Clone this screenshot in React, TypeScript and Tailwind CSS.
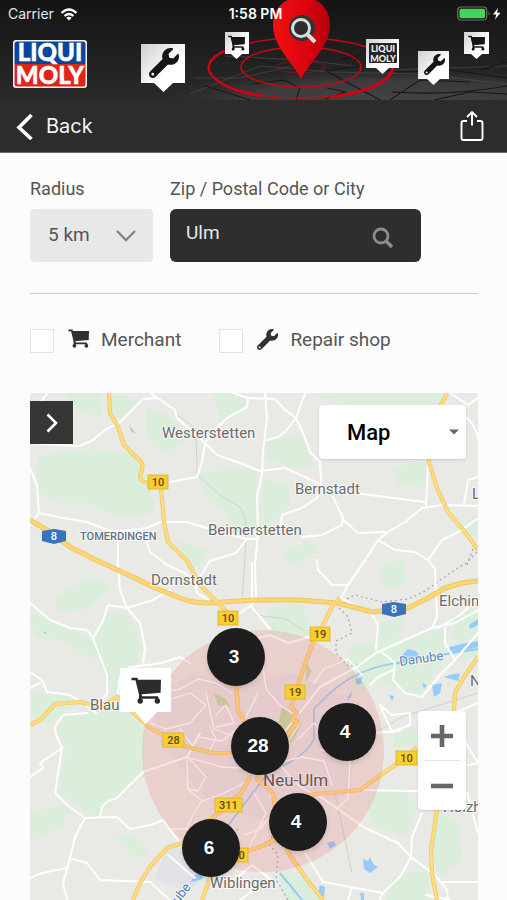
import React, { useState } from 'react';
import { FaWrench } from 'react-icons/fa';

const AREAS = [
  'M10 65 L60 58 L100 62 L118 90 L122 118 L90 124 L60 108 L30 108 L8 96 Z',
  'M85 4 L105 8 L92 24 L80 14 Z',
  'M38 0 L66 0 L70 22 L50 16 Z',
  'M118 16 L140 26 L150 48 L134 60 L118 40 Z',
  'M170 82 L224 76 L230 132 L206 138 L196 116 L182 108 Z',
  'M186 0 L216 0 L212 16 L192 26 Z',
  'M150 150 L176 158 L166 172 L158 168 Z',
  'M238 50 L270 44 L282 72 L262 72 L238 64 Z',
  'M234 88 L256 94 L258 110 L236 132 Z',
  'M292 2 L400 0 L412 6 L396 14 L330 12 Z',
  'M366 76 L396 70 L394 92 L368 90 Z',
  'M254 160 L278 150 L286 158 L262 170 Z',
  'M426 136 L448 124 L448 140 L436 142 Z',
  'M26 206 L62 186 L78 196 L56 214 L30 216 Z',
  'M2 222 L40 238 L58 246 L68 262 L56 262 L36 246 L6 242 Z',
  'M80 220 L98 224 L110 250 L104 272 L84 300 L74 276 L66 248 Z',
  'M4 302 L36 304 L40 314 L18 330 L4 322 Z',
  'M38 322 L90 316 L114 338 L112 382 L88 404 L66 422 L46 410 L30 396 L38 356 L28 336 Z',
  'M2 420 L38 414 L30 432 L2 446 Z',
  'M88 444 L104 462 L116 460 L106 448 Z',
  'M240 218 L268 210 L282 238 L264 244 L240 240 Z',
  'M350 178 L370 168 L374 188 L356 194 Z',
  'M322 254 L380 246 L412 238 L412 266 L388 300 L366 292 L344 284 L330 300 L318 274 Z',
  'M352 232 L372 226 L366 246 L350 252 Z',
  'M424 224 L448 218 L448 262 L430 266 Z',
  'M338 404 L372 396 L384 414 L374 440 L344 432 Z',
  'M404 420 L424 428 L430 462 L412 482 L402 462 Z',
  'M250 478 L276 488 L292 507 L258 507 Z',
  'M366 340 L392 336 L388 352 L366 352 Z',
  'M364 486 L396 478 L398 507 L358 507 Z',
];

const LOCAL_ROADS = [
  'M17 0 L12 8',
  'M0 50 L27 52 L50 53 L63 47 L75 37 L90 29 L102 17 L113 6 L128 5 L145 17 L147 25 L157 34 L175 50 L187 62 L210 70 L230 78',
  'M121 0 L128 6',
  'M203 0 L218 5 L217 14 L197 25 L187 35 L175 50 L172 69 L167 84 L140 89',
  'M218 5 L245 6 L255 17 L266 25 L275 0',
  'M266 25 L275 45 L280 59 L290 69 L291 89 L287 105 L272 115 L252 122 L251 132',
  'M235 0 L237 25 L233 59 L232 82 L227 102 L228 139 L225 172 L226 206',
  'M266 25 L256 38 L248 44 L237 47',
  'M230 78 L255 75 L288 90',
  'M303 104 L313 125 L312 132 L292 142 L272 144',
  'M313 127 L328 140 L358 139 L375 129 L392 115 L412 112 L448 113',
  'M291 94 L332 101 L395 109',
  'M398 72 L396 112',
  'M358 139 L348 147 L332 172 L318 192',
  'M348 147 L365 157 L385 159 L398 167 L412 147 L430 138 L448 125',
  'M398 167 L405 176 L407 224 L402 235',
  'M420 0 L438 12 L448 5 M437 25 Q445 32 448 45',
  'M448 84 L438 87 L434 112',
  'M0 75 L7 92 L9 120 L0 132',
  'M9 120 L33 125 L57 129 L83 139 L117 135 L130 129 L157 129 L190 139 L217 146 L228 146',
  'M88 139 L88 172 L90 197 L97 215',
  'M105 142 L117 149 L120 159 L137 172 L155 180 L166 192 L167 200 L180 208',
  'M217 146 L206 160 L180 168 L170 184',
  'M190 214 L207 222 L222 212 L222 170',
  'M0 210 L20 227 L40 235 L57 237 L63 245 L73 228 L78 212 L97 215 L123 207 L140 197',
  'M97 215 L110 230 L113 244 L115 256 L113 269',
  'M63 245 L77 282 L77 300 L73 307',
  'M88 300 L90 284 L100 274 L132 270 L150 264 L160 270',
  'M0 279 L12 287 L17 299 L40 302 L53 310 L66 320',
  'M0 295 L10 290',
  'M57 320 L33 322 L25 334 L26 342 L32 355 L25 400 L37 412 L55 425 L87 424 L100 436 L120 432 L133 427 L150 450',
  'M32 355 L10 370 L13 375 L0 384',
  'M70 424 L72 414 L78 408 L87 405 L113 379 L157 364 L170 340',
  'M55 425 L45 444 L40 465 L33 490 L37 507',
  'M0 485 L12 480 L37 475',
  'M42 466 L57 470 L70 487 L120 489 L140 507',
  'M138 462 L165 485',
  'M287 167 L288 177 L302 192 L318 192',
  'M335 167 L318 192 L311 205 L336 218 L342 222 L348 232 L346 257',
  'M220 212 L240 236 M225 246 L240 242 L258 250 L280 244',
  'M230 372 L252 342 L290 294 L325 275 L346 260 L368 250 L402 235 L425 230 L448 217',
  'M415 235 L415 250 L425 267 L410 282 L392 304 L375 300 L363 287 L365 270 L353 260',
  'M363 277 L348 284 L340 292 M350 312 L362 339 L380 332 L380 320 L362 322 Z',
  'M340 340 L370 338 M420 322 L448 310',
  'M425 267 L448 240 M408 235 L430 222 L448 205',
  'M288 402 L335 435 L368 450 L381 464 L370 484 L353 500 L350 507',
  'M381 464 L382 444 L392 420',
  'M381 464 L405 482 L417 497 L418 507 M413 489 L448 489 M396 502 L420 507',
  'M330 397 L387 398',
  'M275 460 L293 489 L353 500 M322 494 L318 507',
  'M436 350 L448 370 L438 372',
  'M437 400 L448 440',
  'M240 486 L222 472 L205 486 L225 496 L210 507',
];

const CITY_ROADS = [
  'M150 270 L136 286 L124 300 L150 296 L168 286 L186 290 L202 300',
  'M128 310 L160 300 L176 312 L160 330 L136 336 L120 330',
  'M176 300 L184 336 L206 344',
  'M150 336 L162 352 L158 364 L176 384 L168 398 L158 396 L157 366',
  'M157 364 L192 374 L226 376 L244 366',
  'M157 396 L172 408 L190 402 L214 390',
  'M172 408 L164 420 L156 436 L140 436',
  'M168 344 L192 348 L212 332 L228 300',
  'M186 322 L196 312 L204 330 L186 334',
  'M232 266 L236 296 L250 312 L262 320',
  'M284 290 L294 276 L318 266 L332 282',
  'M270 330 L256 352 L250 372 L270 394 L290 404',
  'M246 370 L272 364 L294 368 L302 392',
  'M290 356 L320 368 L318 406 L306 416',
  'M268 346 L284 330 L300 348 L318 368',
  'M240 400 L246 416 L230 436 L214 442',
  'M224 400 L236 420 L220 452',
  'M178 360 L186 346 L180 334',
];

const MAIN_ROADS = [
  'M79 0 L80 20 L88 34 L94 52 L107 65 Q114 70 112 76 L110 84 Q110 89 118 90',
  'M131 95 L134 129 L138 149 L157 168 L170 192 L192 214 L200 222',
  'M310 205 L303 212 L293 232 L282 252 L273 277 L267 294 L261 314 L267 320 L262 327 L268 329 L257 342',
  'M417 0 L410 14 L402 40 L399 69 L407 95 L418 119 L435 139 L448 157',
  'M448 264 L432 287 L425 300 L424 317 L415 370 L407 417 L401 457 L402 480 L407 507',
  'M0 332 L10 327 L25 311 L50 309 L70 314 L87 304 L103 320 L120 335 L137 344 L157 354 L183 360 L208 360',
  'M206 286 L208 318 L222 340',
  'M220 384 L212 399 L190 419 L175 430 L152 450 L137 455 L120 474 L110 490 L103 507',
  'M182 480 L172 507 M205 462 L230 454 L246 446',
  'M387 355 L365 372 L330 397 L285 401 L262 406',
  'M225 384 L243 400 L245 414 L258 459 L275 484 L293 507',
  'M257 342 L240 356',
];

const MOTORWAY =
  'M0 127 L17 137 L40 154 L68 168 L103 184 L123 194 L150 205 Q162 210 177 210 L225 207 L268 207 L308 210 L342 219 L378 215 L398 205 L415 195 L432 190 L448 188';

const LAKES = [
  'M372 262 L378 256 L386 258 L390 264 L380 268 L370 268 Z',
  'M325 286 L332 284 L332 290 L327 292 Z',
  'M402 292 L412 290 L410 300 L404 304 Z',
  'M420 282 L430 280 L428 288 L414 284 Z',
  'M392 290 L397 292 L394 296 Z',
  'M359 302 L364 303 L362 308 Z',
  'M439 232 L448 226 L448 232 L440 236 Z',
  'M416 255 L436 250 L448 248 L448 254 L424 260 Z',
  'M333 466 L338 468 L340 464 L344 472 L348 474 L340 480 L334 476 Z',
  'M290 492 L295 494 L294 504 L288 500 Z',
  'M330 500 L334 500 L334 507 L331 507 Z',
  'M297 450 L304 448 L306 452 L300 456 Z',
  'M165 482 L176 476 L172 486 L160 490 Z',
  'M318 304 L322 298 L321 304 L317 308 Z',
];

const PLACES = [
  { name: 'Westerstetten', x: 132, y: 45 },
  { name: 'Bernstadt', x: 265, y: 101 },
  { name: 'Beimerstetten', x: 178, y: 142 },
  { name: 'Dornstadt', x: 121, y: 192 },
  { name: 'Elchingen', x: 409, y: 213 },
  { name: 'Nersingen', x: 440, y: 293 },
  { name: 'Langenau', x: 442, y: 106 },
  { name: 'Holzheim', x: 413, y: 419 },
  { name: 'Wiblingen', x: 180, y: 495 },
  { name: 'Blau', x: 60, y: 317 },
];

const SHIELDS = [
  { label: '10', x: 118, y: 82, w: 20 },
  { label: '10', x: 188, y: 218, w: 20 },
  { label: '19', x: 280, y: 234, w: 20 },
  { label: '19', x: 255, y: 292, w: 20 },
  { label: '28', x: 133, y: 340, w: 21 },
  { label: '311', x: 185, y: 405, w: 27 },
  { label: '10', x: 366, y: 358, w: 21 },
  { label: '30', x: 199, y: 455, w: 19 },
];

const CLUSTERS = [
  { count: 3, place: 'left-[177px] top-[235px]' },
  { count: 28, place: 'left-[201px] top-[324px]' },
  { count: 4, place: 'left-[288px] top-[310px]' },
  { count: 4, place: 'left-[239px] top-[400px]' },
  { count: 6, place: 'left-[152px] top-[426px]' },
];

const Cart: React.FC<{ className?: string }> = ({ className }) => (
  <svg viewBox="0 0 30 27" className={className} aria-hidden="true">
    <path d="M0.500 2 H5.500 L10 20.500 H27" fill="none" stroke="currentColor" strokeWidth="2.600" />
    <path d="M5.500 2.800 H30 L29.600 15.800 L8.500 17.500 Z" fill="currentColor" />
    <path d="M9.200 18 V23 M26.500 20.500 V23" stroke="currentColor" strokeWidth="2.400" />
    <circle cx="9.200" cy="24" r="2.700" fill="currentColor" />
    <circle cx="26.300" cy="24" r="2.700" fill="currentColor" />
  </svg>
);

const Magnifier: React.FC<{ className?: string }> = ({ className }) => (
  <svg viewBox="0 0 22 22" className={className} fill="none" stroke="currentColor" aria-hidden="true">
    <circle cx="9" cy="9" r="7" strokeWidth="2.8" />
    <path d="M14 14 L20 20" strokeWidth="3.6" />
  </svg>
);

const HeaderScene: React.FC = () => (
  <svg
    viewBox="0 0 507 100"
    preserveAspectRatio="xMidYMid slice"
    className="absolute inset-0 h-full w-full"
    aria-hidden="true"
  >
    <defs>
      <linearGradient id="sky" x1="0" y1="0" x2="0" y2="1">
        <stop offset="0" stopColor="#141414" />
        <stop offset="1" stopColor="#2a2a2a" />
      </linearGradient>
      <radialGradient id="ground" cx="0.6" cy="1" r="0.6">
        <stop offset="0" stopColor="#434343" />
        <stop offset="0.6" stopColor="#3b3b3b" />
        <stop offset="1" stopColor="#2a2a2a" stopOpacity="0" />
      </radialGradient>
      <linearGradient id="tag" x1="0" y1="0" x2="1" y2="1">
        <stop offset="0" stopColor="#cfcfcf" />
        <stop offset="0.6" stopColor="#ffffff" />
      </linearGradient>
      <linearGradient id="pin" x1="0" y1="0" x2="1" y2="0">
        <stop offset="0" stopColor="#f01010" />
        <stop offset="0.55" stopColor="#dd0510" />
        <stop offset="1" stopColor="#b3000b" />
      </linearGradient>
    </defs>
    <rect width="507" height="100" fill="url(#sky)" />
    <rect x="150" y="44" width="400" height="56" fill="url(#ground)" />
    <g fill="none" stroke="#5a5a5a" strokeWidth="0.8" opacity="0.6">
      <path d="M190 94 L260 66 L330 72 L420 74 L507 84" />
      <path d="M225 56 L300 60 L390 70 L507 66" />
      <path d="M195 78 L240 78 L292 66" />
    </g>
    <g fill="none" stroke="#171717" strokeWidth="1.1">
      <path d="M326 71 L380 100 M326 71 L360 66 L400 72 L450 70 L507 78" />
      <path d="M390 100 L420 80 L470 82 M392 92 Q450 96 507 86" />
      <path d="M325 99 L345 92 L327 88 M230 60 L250 58 L275 64" />
      <path d="M252 84 L284 80 L300 88 L296 100 M205 86 L225 92 L250 100" />
      <path d="M340 60 L360 55 L352 64 M480 70 L507 62 M434 100 L470 92 L507 94" />
    </g>
    <g fill="none" stroke="#cf0410">
      <ellipse cx="301" cy="68" rx="92" ry="30" strokeWidth="1.400" />
      <path d="M224 51 Q194 66 222 84 Q238 93 262 96" strokeWidth="2.400" />
      <path d="M393 68 C391 80 372 92 330 97" strokeWidth="3" />
      <ellipse cx="301" cy="67" rx="60" ry="20" strokeWidth="1.400" />
      <ellipse cx="301" cy="67" rx="24" ry="6" strokeWidth="0.800" opacity="0.6" />
    </g>
    <path d="M301 79 C294 64 273 47 273 25 C273 8 285 -3 301 -3 C318 -3 330 8 330 25 C330 47 308 64 301 79 Z" fill="url(#pin)" />
    <circle cx="302" cy="28" r="13" fill="#333" />
    <circle cx="301" cy="28" r="8.500" fill="#2c2c2c" stroke="#dcdcdc" strokeWidth="3" />
    <path d="M307 34 L315 42" stroke="#dcdcdc" strokeWidth="4" />

    <path d="M141 44 H185 V83 H173 L163.500 92 L154 83 H141 Z" fill="url(#tag)" />
    <path d="M225 32 H249 V54 H242 L236.500 59 L231 54 H225 Z" fill="url(#tag)" />
    <path d="M366 39 H399 V68 H389 L382.500 74 L376 68 H366 Z" fill="url(#tag)" />
    <path d="M418 51 H449 V79 H440 L433.500 85 L427 79 H418 Z" fill="url(#tag)" />
    <path d="M464 32 H489 V54 H482 L476.500 59 L471 54 H464 Z" fill="url(#tag)" />
    <g color="#161616">
      <FaWrench x="149" y="48" size={30} />
      <FaWrench x="424" y="54" size={21} />
      <svg x="228" y="35" width="17" height="16"><Cart className="h-4 w-[17px]" /></svg>
      <svg x="468" y="35" width="17" height="16"><Cart className="h-4 w-[17px]" /></svg>
    </g>
    <rect x="369" y="43" width="28" height="20" rx="1" fill="#252525" />
    <g fill="#f1f1f1" fontFamily="Lato, sans-serif" fontWeight="900" fontSize="9" textAnchor="middle">
      <text x="383" y="52">LIQUI</text>
      <text x="383" y="62">MOLY</text>
    </g>
  </svg>
);

const Logo: React.FC = () => (
  <svg viewBox="0 0 74 48" className="h-12 w-[74px]" role="img" aria-label="LIQUI MOLY">
    <rect width="74" height="48" rx="3" fill="#f4f4f4" />
    <path d="M1.500 24 V4 Q1.500 1.500 4 1.500 H70 Q72.500 1.500 72.500 4 V24 Z" fill="#07479b" />
    <path d="M1.500 24 H72.500 V44 Q72.500 46.500 70 46.500 H4 Q1.500 46.500 1.500 44 Z" fill="#e2231a" />
    <g fill="#fff" stroke="#fff" strokeWidth="0.500" fontFamily="Lato, sans-serif" fontWeight="900" textAnchor="middle">
      <text x="37" y="21" fontSize="24">LIQUI</text>
      <text x="37" y="44" fontSize="24">MOLY</text>
    </g>
  </svg>
);

const StatusBar: React.FC = () => (
  <div className="relative flex h-7 items-center justify-between pl-2 pr-1 font-['Inter',sans-serif] text-sm text-white">
    <div className="flex flex-1 items-center gap-[6px]">
      <span className="text-gray-200">Carrier</span>
      <svg viewBox="0 0 18 13" className="h-[13px] w-[18px]" fill="none" stroke="currentColor" aria-hidden="true">
        <path d="M1.500 5 Q9 -2 16.500 5" strokeWidth="2.200" />
        <path d="M4.500 8 Q9 4 13.500 8" strokeWidth="2.200" />
        <path d="M6.300 9.800 Q9 7.600 11.700 9.800 L9 12.600 Z" fill="currentColor" stroke="none" />
      </svg>
    </div>
    <span className="font-semibold">1:58 PM</span>
    <div className="flex flex-1 justify-end">
      <svg viewBox="0 0 46 16" className="h-4 w-[46px]" aria-hidden="true">
        <rect x="0.700" y="1" width="29" height="13" rx="3.500" fill="none" stroke="#6f6f6f" strokeWidth="1.200" />
        <rect x="2.500" y="2.800" width="25.500" height="9.500" rx="1.800" fill="#45d45b" />
        <path d="M31.500 5.500 Q33.500 7.500 31.500 9.500 Z" fill="#6f6f6f" />
        <path d="M41 2 L36 8.500 H39.300 L38 13.500 L43.500 6.800 H40 Z" fill="#fff" />
      </svg>
    </div>
  </div>
);

const MapCanvas: React.FC = () => (
  <svg
    viewBox="0 0 448 507"
    preserveAspectRatio="xMinYMin slice"
    className="absolute inset-0 h-full w-full"
    role="img"
    aria-label="Map of Ulm"
  >
    <rect width="448" height="507" fill="#e9e9e5" />
    <g fill="#dbeedc" stroke="#dbeedc" strokeWidth="4" strokeLinejoin="round">
      {AREAS.map((d) => <path key={d} d={d} />)}
    </g>
    <path d="M120 310 L160 280 L200 290 L260 280 L330 310 L320 400 L240 430 L180 410 L130 350 Z" fill="#e4e3e4" />
    <path d="M140 450 L180 470 L160 500 L124 486 Z" fill="#e3e3e7" />
    <path d="M184 300 L196 306 L200 314 L188 312 Z M252 314 L272 330 L262 350 L246 342 Z M276 270 L282 278 L276 288 Z" fill="#c3dba6" />
    <path d="M99 32 L106 41 L101 38 Z M13 240 L15 238 L17 241 Z" fill="#a9d78c" />
    <g fill="none" stroke="#d2d2d2" strokeWidth="1">
      <path d="M145 20 L166 36 L167 82 L190 102 L210 114 L215 124 L216 150 L212 207" />
      <path d="M225 222 L256 226 L275 238" />
      <path d="M448 300 L372 324 L300 366 M305 400 L322 480" />
    </g>
    <g fill="none" stroke="#9bc9f5" strokeLinejoin="round">
      <path d="M164 487 L200 430 L238 380 Q276 364 284 346 L284 316 L300 300 Q324 278 360 271 L380 268" strokeWidth="1.600" />
      <path d="M364 271 L410 262 L448 256 M250 480 L272 507" strokeWidth="2" />
    </g>
    <g fill="#98cafb">
      {LAKES.map((d) => <path key={d} d={d} />)}
    </g>
    <g fill="none" stroke="#a6a6a6" strokeWidth="1.200" strokeDasharray="2 3">
      <path d="M317 206 L325 202 L352 209 L378 206 L395 198 L412 186 L420 180 L436 170 L448 158" />
      <path d="M309 215 L318 224 L322 240 L306 248 L306 260 L318 273 L330 272" />
      <path d="M250 430 L238 450 L248 462 L246 486 L258 507 M208 436 L190 450" />
      <path d="M443 156 L437 172" />
    </g>
    <g fill="none" stroke="#fff" strokeLinejoin="round" strokeLinecap="round">
      <g strokeWidth="2">{LOCAL_ROADS.map((d) => <path key={d} d={d} />)}</g>
      <g strokeWidth="1.300">{CITY_ROADS.map((d) => <path key={d} d={d} />)}</g>
    </g>
    <g fill="none" strokeLinejoin="round">
      <g stroke="#eec565" strokeWidth="4.200">
        {MAIN_ROADS.map((d) => <path key={d} d={d} />)}
        <path d={MOTORWAY} strokeWidth="5" />
      </g>
      <g stroke="#fddc80" strokeWidth="2.800">
        {MAIN_ROADS.map((d) => <path key={d} d={d} />)}
        <path d={MOTORWAY} strokeWidth="3.200" stroke="#fdd670" />
      </g>
    </g>
    <circle cx="233" cy="358" r="121" fill="#f06060" fillOpacity="0.180" />

    <g
      fontFamily="Roboto, sans-serif"
      fontSize="15"
      fill="#6b6b6b"
      stroke="#fff"
      strokeWidth="2"
      strokeOpacity="0.700"
      paintOrder="stroke"
    >
      {PLACES.map((p) => <text key={p.name} x={p.x} y={p.y}>{p.name}</text>)}
      <text x="50" y="147" fontSize="11" fontWeight="500" fill="#64708a">TOMERDINGEN</text>
      <text x="370" y="273" fontSize="13" fill="#5c86b4" transform="rotate(-8 370 273)">Danube</text>
      <text x="134" y="529" fontSize="13" fill="#4a80b8" transform="rotate(-52 134 529)">Danube</text>
      <text x="233" y="393" fontSize="17" fill="#6a5358" strokeOpacity="0.300">Neu-Ulm</text>
    </g>

    <g fontFamily="Roboto, sans-serif" fontSize="11" fontWeight="500" textAnchor="middle">
      {SHIELDS.map((s) => (
        <g key={`${s.x}-${s.y}`}>
          <rect x={s.x} y={s.y} width={s.w} height="14" fill="#f8ce30" stroke="#dfb21e" strokeWidth="0.800" />
          <text x={s.x + s.w / 2} y={s.y + 11} fill="#5c4a10">{s.label}</text>
        </g>
      ))}
      {[{ x: 12, y: 136 }, { x: 352, y: 209 }].map((s) => (
        <g key={s.x}>
          <path
            d={`M${s.x} ${s.y + 2} L${s.x + 12} ${s.y} L${s.x + 24} ${s.y + 2} V${s.y + 12} L${s.x + 12} ${s.y + 15} L${s.x} ${s.y + 12} Z`}
            fill="#3873bd"
          />
          <text x={s.x + 12} y={s.y + 11} fill="#fff">8</text>
        </g>
      ))}
    </g>
  </svg>
);

export default function App() {
  const [city, setCity] = useState('Ulm');

  return (
    <div className="flex min-h-screen flex-col bg-[#fcfcfc] font-['Roboto',sans-serif] text-[#555]">
      <header className="relative h-[100px] overflow-hidden bg-[#1c1c1c]">
        <HeaderScene />
        <StatusBar />
        <div className="relative pl-[13px] pt-3">
          <Logo />
        </div>
      </header>

      <nav className="flex h-[53px] items-center justify-between border-b border-[#6a6a6a] bg-[#2c2c2c] pl-4 pr-[22px] text-white">
        <button type="button" className="flex items-center gap-3 font-['Inter',sans-serif] text-xl text-gray-100">
          <svg viewBox="0 0 18 28" className="h-7 w-[18px]" fill="none" stroke="#fff" strokeWidth="3.600" aria-hidden="true">
            <path d="M15.500 3 L3 15.500 L15.500 27" />
          </svg>
          <span>Back</span>
        </button>
        <button type="button" aria-label="Share">
          <svg viewBox="0 0 26 32" className="h-8 w-[26px]" fill="none" stroke="#fff" strokeWidth="1.900" aria-hidden="true">
            <path d="M8 11 H4.500 Q2.500 11 2.500 13 V28 Q2.500 30 4.500 30 H21.500 Q23.500 30 23.500 28 V13 Q23.500 11 21.500 11 H18" />
            <path d="M13 15.500 V2.500 M8 7 L13 2 L18 7" />
          </svg>
        </button>
      </nav>

      <main className="flex flex-1 flex-col pl-[30px] pr-[29px] pt-6">
        <div className="flex gap-[17px]">
          <div className="flex w-[123px] flex-col gap-2">
            <label htmlFor="radius" className="text-lg leading-6">Radius</label>
            <div className="relative">
              <select
                id="radius"
                className="h-[53px] w-full appearance-none rounded-sm bg-[#e8e8e8] pl-[18px] pr-10 text-[19px] outline-none"
              >
                <option>5 km</option>
                <option>10 km</option>
                <option>25 km</option>
              </select>
              <svg
                viewBox="0 0 20 12"
                className="pointer-events-none absolute right-[17px] top-[21px] h-3 w-5"
                fill="none"
                stroke="#858585"
                strokeWidth="2.400"
                aria-hidden="true"
              >
                <path d="M1 1 L10 10 L19 1" />
              </svg>
            </div>
          </div>
          <div className="flex max-w-[251px] flex-1 flex-col gap-2">
            <label htmlFor="city" className="whitespace-nowrap text-lg leading-6">Zip / Postal Code or City</label>
            <div className="flex h-[53px] items-center rounded-md bg-[#2e2e2e] pl-4 pr-[27px]">
              <input
                id="city"
                value={city}
                onChange={(e) => setCity(e.target.value)}
                className="min-w-0 flex-1 bg-transparent pb-1 text-[19px] text-gray-200 outline-none"
              />
              <button type="button" aria-label="Search" className="pt-1 text-[#8c8c8c]">
                <Magnifier className="h-[22px] w-[22px]" />
              </button>
            </div>
          </div>
        </div>

        <hr className="mt-[31px] border-[#c9c9c9]" />

        <div className="mt-[35px] flex gap-[38px] text-[19px] leading-[22px]">
          <label className="flex items-start">
            <input type="checkbox" className="h-6 w-6 appearance-none border border-[#e2e2e2] bg-white checked:bg-gray-700" />
            <Cart className="ml-[14px] h-[19px] w-[21px] text-[#303030]" />
            <span className="ml-3">Merchant</span>
          </label>
          <label className="flex items-start">
            <input type="checkbox" className="h-6 w-6 appearance-none border border-[#e2e2e2] bg-white checked:bg-gray-700" />
            <FaWrench className="ml-[14px] h-[21px] w-[21px] text-[#303030]" />
            <span className="ml-3">Repair shop</span>
          </label>
        </div>

        <section className="relative mt-10 min-h-[507px] flex-1 overflow-hidden">
          <MapCanvas />

          {/* Merchant pin */}
          <div className="absolute left-[90px] top-[275px] text-[#2b2b2b]">
            <svg viewBox="0 0 51 57" className="h-[57px] w-[51px]" aria-hidden="true">
              <path d="M0 0 H51 V44 H37 L26 56 L15 44 H0 Z" fill="#fff" />
            </svg>
            <Cart className="absolute left-[11px] top-[9px] h-[27px] w-[30px]" />
          </div>

          {CLUSTERS.map((cluster, idx) => (
            <button
              key={idx}
              type="button"
              className={`absolute flex h-[58px] w-[58px] items-center justify-center rounded-full bg-[#1d1d1d] pr-1 text-[19px] font-bold text-white shadow-md font-['Liberation_Sans',sans-serif] ${cluster.place}`}
            >
              {cluster.count}
            </button>
          ))}

          <button
            type="button"
            aria-label="Open list"
            className="absolute left-0 top-2 flex h-[43px] w-[43px] items-center justify-center bg-[#363634]"
          >
            <svg viewBox="0 0 12 20" className="h-5 w-3" fill="none" stroke="#fff" strokeWidth="2.600" aria-hidden="true">
              <path d="M1.500 1.500 L10 10 L1.500 18.500" />
            </svg>
          </button>

          <div className="absolute right-3 top-3">
            <select
              aria-label="Map type"
              className="h-[54px] w-[147px] appearance-none rounded-sm bg-white pl-7 text-[22px] font-medium text-black shadow outline-none"
            >
              <option>Map</option>
              <option>Satellite</option>
            </select>
            <svg viewBox="0 0 10 6" className="pointer-events-none absolute right-[7px] top-6 h-[6px] w-[10px]" aria-hidden="true">
              <path d="M0 0.500 H10 L5 5.500 Z" fill="#666" />
            </svg>
          </div>

          <div className="absolute right-3 top-[318px] flex w-12 flex-col rounded-sm bg-white shadow">
            <button type="button" aria-label="Zoom in" className="flex h-[49px] items-center justify-center">
              <svg viewBox="0 0 22 22" className="h-[22px] w-[22px]" stroke="#666" strokeWidth="4.600" aria-hidden="true">
                <path d="M0 11 H22 M11 0 V22" />
              </svg>
            </button>
            <div className="mx-[6px] border-t border-[#e0e0e0]" />
            <button type="button" aria-label="Zoom out" className="flex h-[49px] items-center justify-center">
              <svg viewBox="0 0 22 22" className="h-[22px] w-[22px]" stroke="#666" strokeWidth="4.600" aria-hidden="true">
                <path d="M0 11 H22" />
              </svg>
            </button>
          </div>
        </section>
      </main>
    </div>
  );
}
